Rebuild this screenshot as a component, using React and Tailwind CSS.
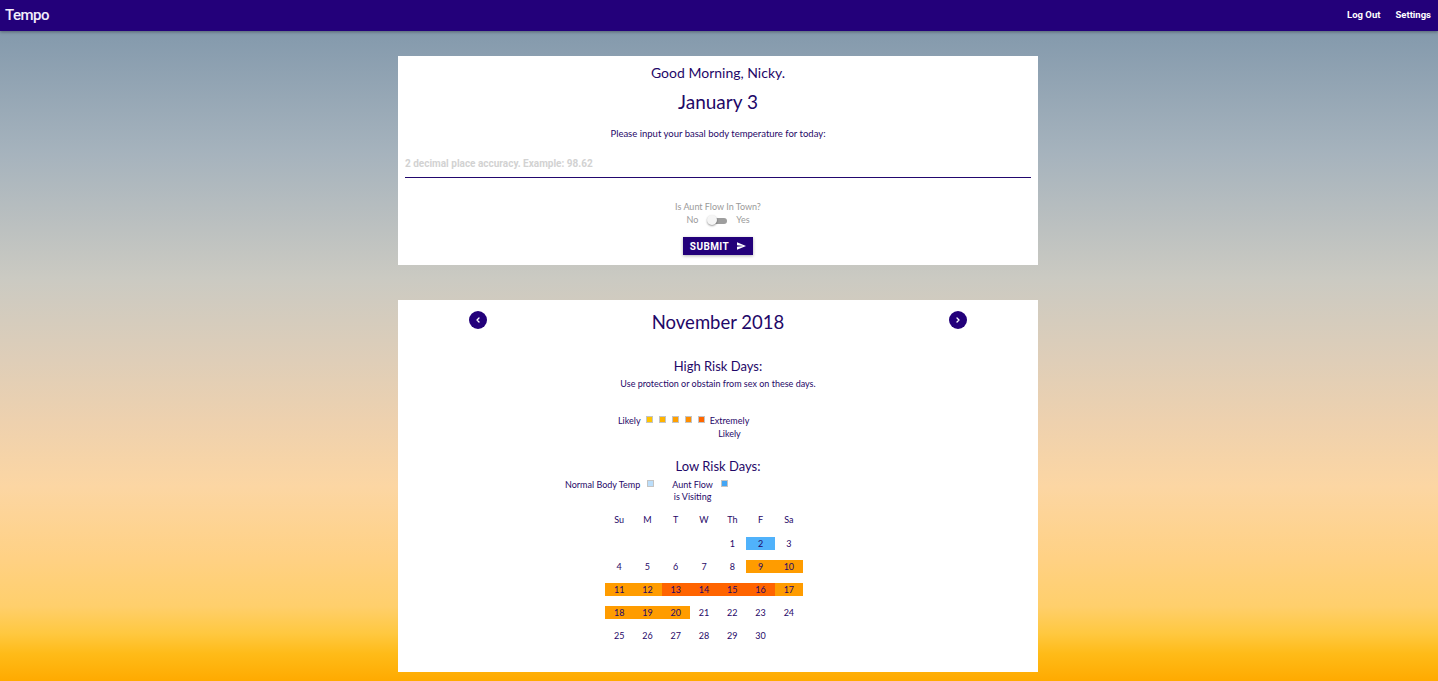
import React from "react";

const ink = "text-[#1f0868]";

function Chevron({ dir }) {
  return (
    <svg width="6" height="6" viewBox="0 0 6 6" fill="none">
      {dir === "left" ? (
        <path d="M4 1 L2 3 L4 5" stroke="white" strokeWidth="1.3" strokeLinecap="round" strokeLinejoin="round" />
      ) : (
        <path d="M2 1 L4 3 L2 5" stroke="white" strokeWidth="1.3" strokeLinecap="round" strokeLinejoin="round" />
      )}
    </svg>
  );
}

function Sq({ color }) {
  return <span className="block w-[7px] h-[7px] border border-[#c4c4c4] mt-[1px] shrink-0" style={{ backgroundColor: color }} />;
}

const weeks = [
  [null, null, null, null, 1, 2, 3],
  [4, 5, 6, 7, 8, 9, 10],
  [11, 12, 13, 14, 15, 16, 17],
  [18, 19, 20, 21, 22, 23, 24],
  [25, 26, 27, 28, 29, 30, null],
];

const colors = {
  2: "bg-[#50b2fb]",
  9: "bg-[#ff9c00]",
  10: "bg-[#ff9c00]",
  11: "bg-[#ff9c00]",
  12: "bg-[#ff9c00]",
  13: "bg-[#ff6400]",
  14: "bg-[#ff6400]",
  15: "bg-[#ff6400]",
  16: "bg-[#ff6400]",
  17: "bg-[#ff9c00]",
  18: "bg-[#ff9c00]",
  19: "bg-[#ff9c00]",
  20: "bg-[#ff9c00]",
};

export default function App() {
  return (
    <div
      className="w-full min-h-[681px] bg-[linear-gradient(180deg,#7b93a8_0%,#a6b3bd_22.6%,#cbcac2_41%,#dfceb8_53%,#eed1ae_62%,#fcd6a3_71.4%,#ffd184_82%,#ffcf6c_89%,#ffc840_93%,#ffbb18_96%,#ffaa00_100%)]"
      style={{ fontFamily: "Lato, 'Noto Sans', sans-serif" }}
    >
      {/* Nav */}
      <div className="h-[31px] bg-[#23007a] shadow-[0_1px_3px_rgba(0,0,0,0.35)] flex items-center justify-between pl-[5px] pr-[7px]">
        <span className="text-[#f3eefc] text-[15px] font-medium tracking-[-0.5px]" style={{ fontFamily: "Roboto, sans-serif" }}>
          Tempo
        </span>
        <div className="flex items-center gap-[15px] text-white text-[9.5px] font-bold" style={{ fontFamily: "Roboto, sans-serif" }}>
          <span>Log Out</span>
          <span>Settings</span>
        </div>
      </div>

      <div className="flex flex-col items-center pr-[2px]">
        {/* Card 1 */}
        <div className={`w-[640px] bg-white mt-[25px] pt-[9px] pb-[10px] flex flex-col items-center ${ink}`}>
          <div className="text-[14px] leading-[16px]">Good Morning, Nicky.</div>
          <div className="text-[19px] leading-[22px] mt-[10px]">January 3</div>
          <div className="text-[9.5px] leading-[12px] mt-[15px]">Please input your basal body temperature for today:</div>
          <div className="self-stretch mx-[7px] mt-[10px] h-[28px] border-b border-[#22086e] flex items-center">
            <span className="text-[#d2d2d2] text-[10px] font-bold" style={{ fontFamily: "Roboto, sans-serif" }}>
              2 decimal place accuracy. Example: 98.62
            </span>
          </div>
          <div className="text-[9px] leading-[12px] mt-[23px] text-[#9a9a9a]">Is Aunt Flow In Town?</div>
          <div className="flex items-center mt-[1px] h-[12px] text-[9px] text-[#9a9a9a]">
            <span>No</span>
            <span className="relative w-[20px] h-[12px] ml-[9px] mr-[9px]">
              <span className="absolute left-[6px] top-[3.5px] w-[14px] h-[6px] rounded-full bg-[#9e9e9e]" />
              <span className="absolute left-0 top-[1px] w-[10px] h-[10px] rounded-full bg-[#f5f5f5] shadow-[0_1px_2px_rgba(0,0,0,0.4)]" />
            </span>
            <span>Yes</span>
          </div>
          <div
            className="mt-[11px] h-[18px] w-[70px] bg-[#23007a] shadow-[0_1px_3px_rgba(0,0,0,0.3)] flex items-center justify-center gap-[8px] text-white text-[10px] font-bold tracking-[0.4px]"
            style={{ fontFamily: "Roboto, sans-serif" }}
          >
            <span>SUBMIT</span>
            <svg width="9" height="8" viewBox="2 3 21 18" fill="white">
              <path d="M2.01 21L23 12 2.01 3 2 10l15 2-15 2z" />
            </svg>
          </div>
        </div>

        {/* Card 2 */}
        <div className={`w-[640px] bg-white mt-[35px] pt-[11px] pb-[30px] flex flex-col ${ink}`}>
          <div className="h-[18px] px-[71px] flex items-center justify-between">
            <span className="w-[18px] h-[18px] rounded-full bg-[#23007a] flex items-center justify-center">
              <Chevron dir="left" />
            </span>
            <span className="text-[18.5px] leading-[22px] mt-[4px]">November 2018</span>
            <span className="w-[18px] h-[18px] rounded-full bg-[#23007a] flex items-center justify-center">
              <Chevron dir="right" />
            </span>
          </div>
          <div className="text-[13px] leading-[16px] mt-[29px] text-center">High Risk Days:</div>
          <div className="text-[9px] leading-[12px] mt-[4px] text-center">Use protection or obstain from sex on these days.</div>

          <div className="flex items-start ml-[220px] mt-[24px] text-[9px] leading-[13px]">
            <span>Likely</span>
            <span className="flex gap-[6px] ml-[5px] mt-[1px]">
              <Sq color="#ffc400" />
              <Sq color="#ffb300" />
              <Sq color="#ffa000" />
              <Sq color="#ff8f00" />
              <Sq color="#ff6600" />
            </span>
            <span className="ml-[5px] text-center">
              Extremely
              <br />
              Likely
            </span>
          </div>

          <div className="text-[13px] leading-[16px] mt-[18px] text-center">Low Risk Days:</div>
          <div className="flex items-start ml-[167px] mt-[5px] text-[9px] leading-[12px]">
            <span>Normal Body Temp</span>
            <span className="ml-[7px]">
              <Sq color="#bbdefb" />
            </span>
            <span className="ml-[18px] text-center">
              Aunt Flow
              <br />
              is Visiting
            </span>
            <span className="ml-[8px]">
              <Sq color="#42a5f5" />
            </span>
          </div>

          <div className="ml-[207px] mt-[10px] w-[198px] flex flex-col text-[9px]">
            <div className="grid grid-cols-7 h-[13px] items-center mb-[11px]">
              {["Su", "M", "T", "W", "Th", "F", "Sa"].map((d) => (
                <span key={d} className="text-center leading-[13px]">
                  {d}
                </span>
              ))}
            </div>
            <div className="flex flex-col gap-[10px]">
              {weeks.map((w, i) => (
                <div key={i} className="grid grid-cols-7 h-[13px]">
                  {w.map((d, j) => (
                    <span
                      key={j}
                      className={`h-[13px] leading-[13px] text-center ${d && colors[d] ? colors[d] : ""}`}
                    >
                      {d ?? ""}
                    </span>
                  ))}
                </div>
              ))}
            </div>
          </div>
        </div>
      </div>
    </div>
  );
}
